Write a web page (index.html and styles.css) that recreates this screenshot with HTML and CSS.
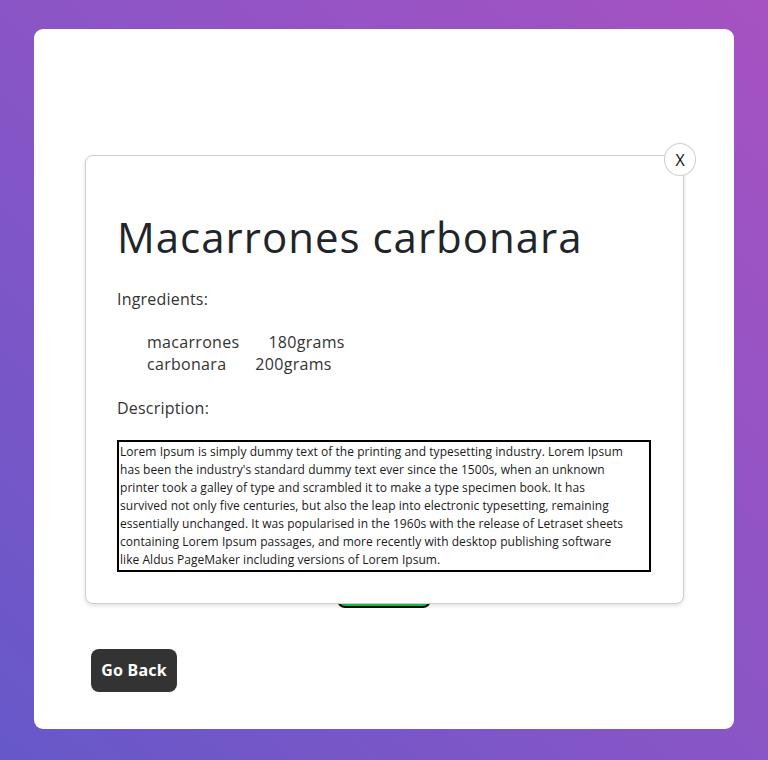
FILE: index.html
```html
<!DOCTYPE html>
<html lang="en">
<head>
<meta charset="utf-8">
<title>Macarrones carbonara</title>
<link rel="stylesheet" href="styles.css">
</head>
<body>
<main class="card">
  <div class="page">
    <button class="btn-green" type="button">Ver receta</button>
    <button class="btn-back" type="button">Go Back</button>
  </div>

  <section class="modal" role="dialog" aria-label="Macarrones carbonara">
    <button class="modal-close" type="button">X</button>
    <h1 class="recipe-title">Macarrones carbonara</h1>
    <p class="label">Ingredients:</p>
    <ul class="ingredients">
      <li><span class="ing-name">macarrones</span><span class="ing-qty">180grams</span></li>
      <li><span class="ing-name">carbonara</span><span class="ing-qty">200grams</span></li>
    </ul>
    <p class="label">Description:</p>
    <div class="description">Lorem Ipsum is simply dummy text of the printing and typesetting industry. Lorem Ipsum has been the industry's standard dummy text ever since the 1500s, when an unknown printer took a galley of type and scrambled it to make a type specimen book. It has survived not only five centuries, but also the leap into electronic typesetting, remaining essentially unchanged. It was popularised in the 1960s with the release of Letraset sheets containing Lorem Ipsum passages, and more recently with desktop publishing software like Aldus PageMaker including versions of Lorem Ipsum.</div>
  </section>
</main>
</body>
</html>
```

FILE: styles.css
```css
* { box-sizing: border-box; }

html, body { height: 100%; }

body {
  margin: 0;
  padding: 29px 34px 31px;
  background: linear-gradient(to top right, #6658c9 0%, #8a55c6 50%, #a652c2 100%);
  font-family: "Open Sans", "Noto Sans", sans-serif;
  color: #212529;
}

.card {
  position: relative;
  width: 700px;
  height: 700px;
  background: #fff;
  border-radius: 9px;
}

.page {
  display: flex;
  flex-direction: column;
  padding: 541px 0 0 57px;
}

.btn-green {
  align-self: flex-start;
  margin-left: 246px;
  width: 94px;
  height: 38px;
  background: #22c54a;
  border: 2px solid #111;
  border-radius: 8px;
  color: #fff;
  font: 600 15px "Open Sans", sans-serif;
}

.btn-back {
  align-self: flex-start;
  margin-top: 41px;
  width: 86px;
  height: 43px;
  background: #333;
  border: 0;
  border-radius: 8px;
  color: #fff;
  font: 700 16px "Noto Sans", sans-serif;
  letter-spacing: 0.2px;
  padding: 0 0 2px;
}

.modal {
  position: absolute;
  top: 126px;
  left: 51px;
  width: 599px;
  height: 449px;
  background: #fff;
  border: 1px solid #cfcfcf;
  border-radius: 8px;
  box-shadow: 0 2px 4px rgba(0,0,0,0.12);
  padding: 57px 32px 0 31px;
}

.modal-close {
  position: absolute;
  top: -13px;
  right: -13px;
  width: 32px;
  height: 33px;
  border-radius: 50%;
  border: 1px solid #cfcfcf;
  background: #fff;
  color: #111;
  font: 400 16px "Open Sans", sans-serif;
  padding: 0;
  display: flex;
  align-items: center;
  justify-content: center;
}

.recipe-title {
  margin: 0;
  font-family: "Open Sans", sans-serif;
  font-weight: 400;
  font-size: 42px;
  line-height: 48px;
  color: #212529;
  letter-spacing: 1px;
}

.label {
  margin: 26px 0 0;
  font-size: 16px;
  line-height: 24px;
  color: #333;
  letter-spacing: 0.2px;
}

.ingredients {
  list-style: none;
  margin: 20px 0 0;
  padding: 0 0 0 30px;
  font-size: 16px;
  line-height: 22px;
  color: #333;
  letter-spacing: 0.3px;
}

.ingredients li {
  display: flex;
  gap: 29px;
}

.ingredients + .label { margin-top: 21px; }

.description {
  margin-top: 20px;
  width: 534px;
  border: 2px solid #000;
  padding: 1px 21px 1px 1px;
  font-size: 12px;
  line-height: 18px;
  color: #1a1a1a;
  letter-spacing: 0.05px;
}
```
